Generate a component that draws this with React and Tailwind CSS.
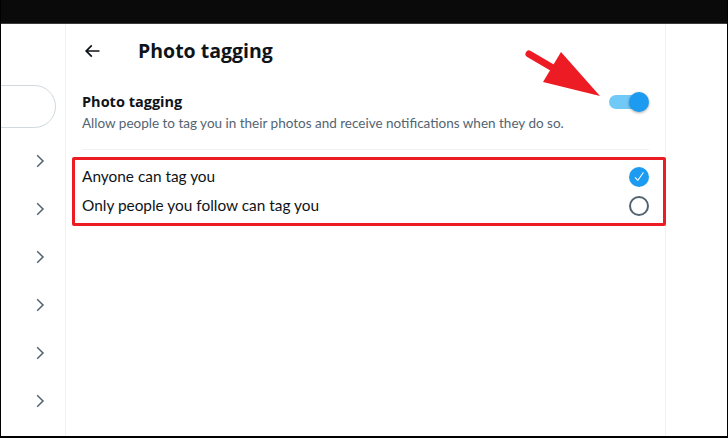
import React from 'react';

const font = { fontFamily: 'Lato, "Open Sans", "Noto Sans", sans-serif' };
const boldFont = { fontFamily: '"Open Sans", Lato, "Noto Sans", sans-serif' };

const Chevron = () => (
    <svg viewBox="0 0 24 24" className="w-[18px] h-[18px] fill-[#536471]">
        <path d="M14.586 12L7.543 4.96l1.414-1.42L17.414 12l-8.457 8.46-1.414-1.42L14.586 12z" />
    </svg>
);

const BackArrow = () => (
    <svg viewBox="0 0 24 24" className="w-5 h-5 fill-[#0f1419]">
        <path d="M7.414 13l5.043 5.04-1.414 1.42L3.586 12l7.457-7.46 1.414 1.42L7.414 11H21v2H7.414z" />
    </svg>
);

const Radio = ({ checked }) =>
    checked ? (
        <div className="w-5 h-5 rounded-full bg-[#1d9bf0] flex items-center justify-center">
            <svg viewBox="0 0 24 24" className="w-[13px] h-[13px] fill-white">
                <path d="M9 20c-.264 0-.52-.104-.707-.293l-4.785-4.785c-.39-.39-.39-1.023 0-1.414s1.023-.39 1.414 0l3.946 3.945L18.075 4.41c.32-.45.94-.558 1.395-.24.45.318.56.942.24 1.394L9.817 19.577c-.17.24-.438.395-.732.42-.028.002-.057.003-.085.003z" />
            </svg>
        </div>
    ) : (
        <div className="w-5 h-5 rounded-full border-2 border-[#536471]" />
    );

const App = () => {
    const options = [
        { label: 'Anyone can tag you', checked: true },
        { label: 'Only people you follow can tag you', checked: false },
    ];

    return (
        <div className="relative w-[728px] h-[438px] bg-white overflow-hidden flex flex-col border-l border-r border-b-2 border-black" style={font}>
            <div className="h-[24px] bg-[#0a0a0a] border-b border-[#3a3a3a] shrink-0" />
            <div className="flex flex-1 min-h-0">
                {/* left nav column */}
                <div className="w-[65px] shrink-0 border-r border-[#eff3f4] overflow-hidden flex flex-col">
                    <div className="flex justify-end pr-[9px] mt-[61px]">
                        <div className="w-[140px] h-[43px] shrink-0 rounded-full border border-[#cfd9de]" />
                    </div>
                    <div className="mt-[9px] flex flex-col">
                        {[0, 1, 2, 3, 4, 5].map((i) => (
                            <div key={i} className="h-[48px] flex items-center justify-end pr-[16px]">
                                <Chevron />
                            </div>
                        ))}
                    </div>
                </div>

                {/* main column */}
                <div className="w-[600px] shrink-0 border-r border-[#eff3f4] flex flex-col">
                    <div className="h-[53px] flex items-center px-4">
                        <div className="w-[56px] flex items-center">
                            <BackArrow />
                        </div>
                        <h2 className="text-[19.5px] font-bold text-[#0f1419] leading-6" style={boldFont}>Photo tagging</h2>
                    </div>

                    <div className="px-4 pt-[15px] pb-[18px] flex items-start justify-between">
                        <div>
                            <div className="text-[14.5px] font-bold text-[#0f1419] leading-5" style={boldFont}>Photo tagging</div>
                            <div className="text-[13.5px] text-[#536471] leading-4 mt-[3px] whitespace-nowrap">
                                Allow people to tag you in their photos and receive notifications when they do so.
                            </div>
                        </div>
                        <div className="relative w-[40px] h-[20px] shrink-0 flex items-center">
                            <div className="w-[38px] h-[14px] rounded-full bg-[#71c9f8]" />
                            <div className="absolute right-0 top-0 w-5 h-5 rounded-full bg-[#1d9bf0] shadow-[0_1px_3px_rgba(0,0,0,0.35)]" />
                        </div>
                    </div>
                    <div className="mx-4 border-t border-[#eff3f4]" />

                    <div className="pt-[12px] px-4 flex flex-col">
                        {options.map((o) => (
                            <div key={o.label} className="h-[29px] flex items-center justify-between">
                                <span className="text-[15.4px] text-[#0f1419]">{o.label}</span>
                                <Radio checked={o.checked} />
                            </div>
                        ))}
                    </div>
                </div>
                <div className="flex-1" />
            </div>

            {/* annotations */}
            <div className="absolute left-[71px] top-[157px] w-[594px] h-[69px] border-[3px] border-[#ec1c24] rounded-[2px] pointer-events-none" />
            <svg className="absolute left-0 top-0 pointer-events-none" width="728" height="438">
                <line x1="528" y1="54" x2="557" y2="71" stroke="#ed1c24" strokeWidth="7" strokeLinecap="round" />
                <polygon points="560,52 542,82 599,96" fill="#ed1c24" />
            </svg>
        </div>
    );
};

export default App;
